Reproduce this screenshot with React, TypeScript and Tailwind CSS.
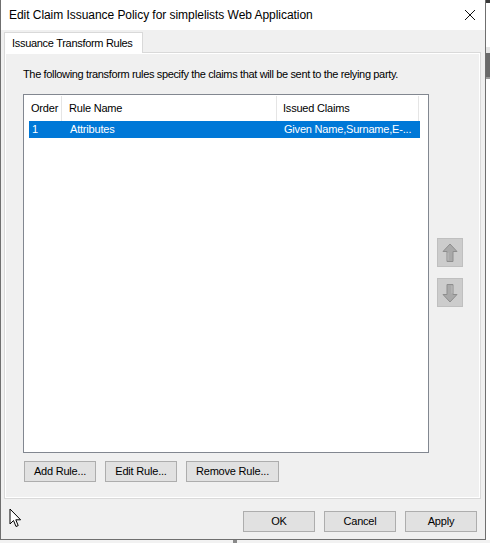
import React from "react";

const btn =
  "h-[21px] border border-[#adadad] bg-[#e1e1e1] text-[11px] tracking-[-0.2px] text-black flex items-center justify-center";

function Arrow({ down }: { down?: boolean }) {
  return (
    <svg width="16" height="20" viewBox="0 0 16 20" className={down ? "rotate-180" : ""}>
      <path
        d="M8 1 L15 8.5 L11 8.5 L11 18.5 L5 18.5 L5 8.5 L1 8.5 Z"
        fill="#a9a9a9"
        stroke="#8e8e8e"
        strokeWidth="1"
        strokeLinejoin="round"
      />
      <path d="M6 9.5 L6 17.5" stroke="#bdbdbd" strokeWidth="1" />
    </svg>
  );
}

function Cursor() {
  return (
    <svg width="13" height="20" viewBox="0 0 13 20">
      <path
        d="M1 1 L1 16 L4.5 12.5 L7 18.5 L9.2 17.6 L6.8 11.8 L11.6 11.8 Z"
        fill="#ffffff"
        stroke="#000000"
        strokeWidth="1"
        strokeLinejoin="miter"
      />
    </svg>
  );
}

export default function App() {
  return (
    <div
      className="w-[490px] h-[543px] bg-[#f2f2f2] overflow-hidden flex flex-col text-black"
      style={{ fontFamily: '"Segoe UI", "Liberation Sans", Arial, sans-serif' }}
    >
      <div className="flex">
        {/* dialog window */}
        <div className="w-[486px] h-[540px] border-x border-b border-[#6f6f6f] bg-[#f0f0f0] flex flex-col">
          {/* title bar */}
          <div className="h-[30px] bg-white flex items-center justify-between pl-[8px] pr-[8px]">
            <span className="text-[12px] leading-none tracking-[-0.05px]">
              Edit Claim Issuance Policy for simplelists Web Application
            </span>
            <svg width="12" height="12" viewBox="0 0 12 12" className="mr-[1px]">
              <path d="M1 1 L11 11 M11 1 L1 11" stroke="#111" strokeWidth="1" />
            </svg>
          </div>

          {/* tab strip */}
          <div className="pl-[3px] pt-[2px] flex">
            <div className="h-[21px] w-[139px] bg-white border border-b-0 border-[#d9d9d9] text-[11px] tracking-[-0.3px] flex items-center pl-[7px] -mb-px relative whitespace-nowrap">
              Issuance Transform Rules
            </div>
          </div>

          {/* tab panel */}
          <div className="ml-[3px] mr-[4px] h-[447px] border border-[#d9d9d9] flex">
            <div className="flex-1 border border-white flex flex-col pl-[17px] pr-[16px] pt-[13px]">
              <p className="text-[11px] leading-[14px] tracking-[-0.35px] whitespace-nowrap">
                The following transform rules specify the claims that will be sent to the relying party.
              </p>

              <div className="flex mt-[13px]">
                {/* list view */}
                <div className="w-[406px] h-[359px] border border-[#828790] bg-white pt-[1px] pl-[5px]">
                  <div className="flex h-[25px] text-[11px] tracking-[-0.2px]">
                    <div className="w-[33px] border-r border-[#e5e5e5] flex items-center pl-[2px]">Order</div>
                    <div className="w-[215px] border-r border-[#e5e5e5] flex items-center pl-[7px]">Rule Name</div>
                    <div className="w-[142px] border-r border-[#e5e5e5] flex items-center pl-[6px]">Issued Claims</div>
                  </div>
                  <div className="flex h-[17px] w-[391px] bg-[#0078d7] text-white text-[11px] tracking-[-0.2px]">
                    <div className="w-[33px] flex items-center pl-[3px]">1</div>
                    <div className="w-[215px] flex items-center pl-[8px]">Attributes</div>
                    <div className="w-[142px] flex items-center pl-[7px] whitespace-nowrap overflow-hidden">
                      Given Name,Surname,E-...
                    </div>
                  </div>
                </div>

                {/* move buttons */}
                <div className="flex flex-col ml-[8px] pt-[144px] gap-[11px]">
                  <div className="w-[26px] h-[29px] bg-[#cccccc] border border-[#bfbfbf] flex items-center justify-center">
                    <Arrow />
                  </div>
                  <div className="w-[26px] h-[29px] bg-[#cccccc] border border-[#bfbfbf] flex items-center justify-center">
                    <Arrow down />
                  </div>
                </div>
              </div>

              <div className="flex gap-[9px] mt-[8px] pl-[1px]">
                <div className={`${btn} w-[72px]`}>Add Rule...</div>
                <div className={`${btn} w-[72px]`}>Edit Rule...</div>
                <div className={`${btn} w-[93px]`}>Remove Rule...</div>
              </div>
            </div>
          </div>

          {/* footer */}
          <div className="flex items-start mt-[7px] pl-[8px] pr-[8px]">
            <div className="mt-[2px]">
              <Cursor />
            </div>
            <div className="ml-auto flex gap-[9px] mt-[5px]">
              <div className={`${btn} w-[72px]`}>OK</div>
              <div className={`${btn} w-[72px]`}>Cancel</div>
              <div className={`${btn} w-[72px]`}>Apply</div>
            </div>
          </div>
        </div>

        {/* background window sliver */}
        <div className="flex-1 flex flex-col">
          <div className="h-[3px] bg-[#3a3a3a]" />
          <div className="h-[44px] bg-white" />
          <div className="h-[6px] bg-[#e6e6e6]" />
          <div className="h-[24px] bg-[#6a6a6a]" />
          <div className="h-[2px] bg-[#9a9a9a]" />
          <div className="flex-1 bg-white" />
        </div>
      </div>
      <div className="flex-1 flex">
        <div className="w-[233px]" />
        <div className="w-[4px] bg-[#8a8a8a]" />
      </div>
    </div>
  );
}
